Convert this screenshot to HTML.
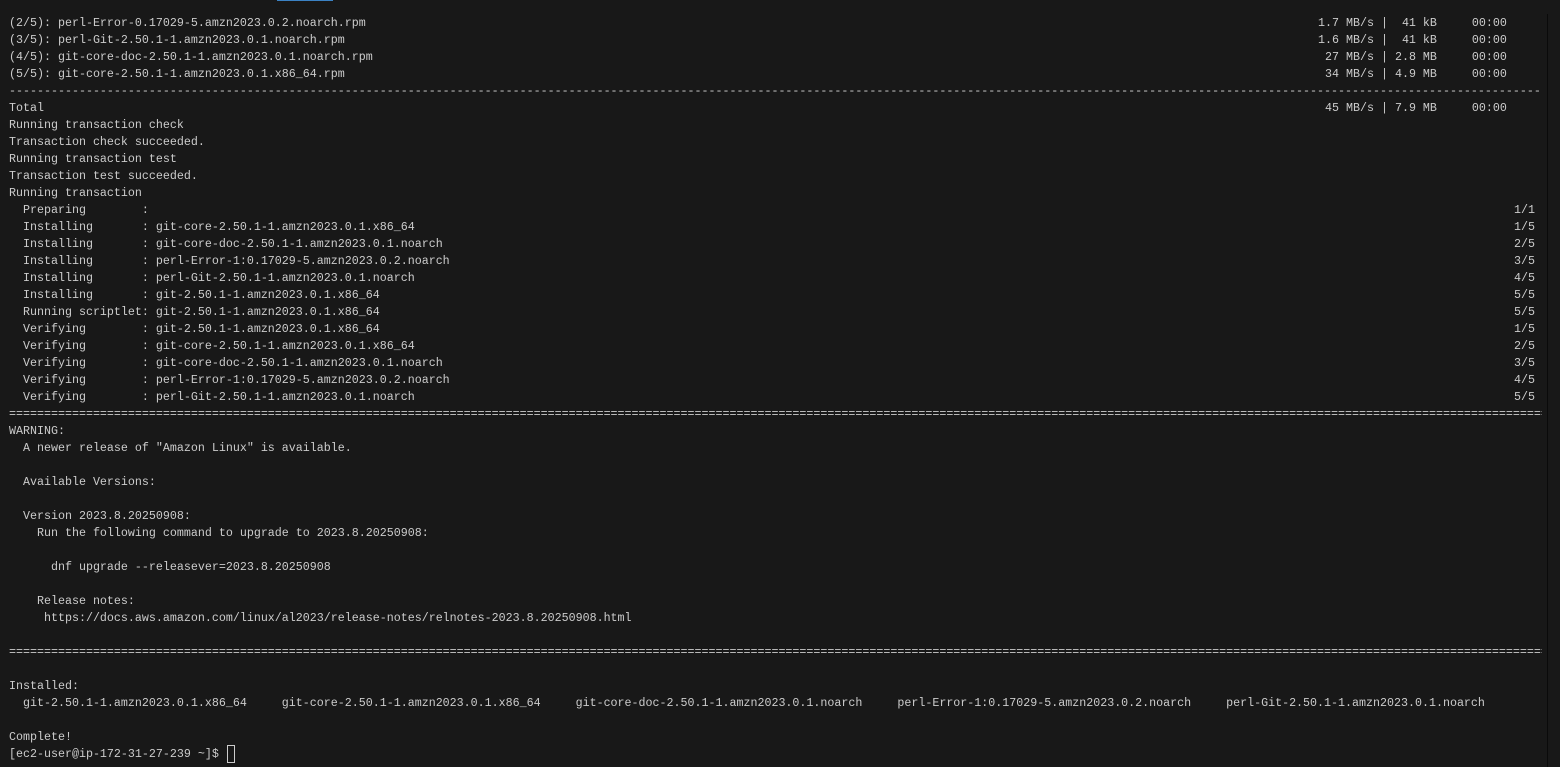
<!DOCTYPE html>
<html><head><meta charset="utf-8"><style>
html,body{margin:0;padding:0;background:#181818;width:1560px;height:767px;overflow:hidden}
#t{position:absolute;left:9px;top:15px;margin:0;font-family:"Liberation Mono",monospace;font-size:11.67px;line-height:17px;color:#cccccc;white-space:pre}
.l{position:relative;height:17px}
.h{overflow:hidden;width:1533px}
.r{position:absolute;top:0}
.b{left:1505px;}
#vl{position:absolute;left:1547px;top:14px;width:1px;height:753px;background:#0a0a0a}
#bl{position:absolute;left:277px;top:0;width:56px;height:1px;background:#3b82c4}
#cur{position:absolute;left:227px;top:745px;width:6px;height:16px;border:1px solid #cccccc}
</style></head><body>
<div id="bl"></div><div id="vl"></div>
<div id="t"><div class="l">(2/5): perl-Error-0.17029-5.amzn2023.0.2.noarch.rpm<span class="r" style="left:1309px">1.7 MB/s |  41 kB     00:00</span></div><div class="l">(3/5): perl-Git-2.50.1-1.amzn2023.0.1.noarch.rpm<span class="r" style="left:1309px">1.6 MB/s |  41 kB     00:00</span></div><div class="l">(4/5): git-core-doc-2.50.1-1.amzn2023.0.1.noarch.rpm<span class="r" style="left:1316px">27 MB/s | 2.8 MB     00:00</span></div><div class="l">(5/5): git-core-2.50.1-1.amzn2023.0.1.x86_64.rpm<span class="r" style="left:1316px">34 MB/s | 4.9 MB     00:00</span></div><div class="l h">-----------------------------------------------------------------------------------------------------------------------------------------------------------------------------------------------------------------------------------</div><div class="l">Total<span class="r" style="left:1316px">45 MB/s | 7.9 MB     00:00</span></div><div class="l">Running transaction check</div><div class="l">Transaction check succeeded.</div><div class="l">Running transaction test</div><div class="l">Transaction test succeeded.</div><div class="l">Running transaction</div><div class="l">  Preparing        :<span class="r b">1/1</span></div><div class="l">  Installing       : git-core-2.50.1-1.amzn2023.0.1.x86_64<span class="r b">1/5</span></div><div class="l">  Installing       : git-core-doc-2.50.1-1.amzn2023.0.1.noarch<span class="r b">2/5</span></div><div class="l">  Installing       : perl-Error-1:0.17029-5.amzn2023.0.2.noarch<span class="r b">3/5</span></div><div class="l">  Installing       : perl-Git-2.50.1-1.amzn2023.0.1.noarch<span class="r b">4/5</span></div><div class="l">  Installing       : git-2.50.1-1.amzn2023.0.1.x86_64<span class="r b">5/5</span></div><div class="l">  Running scriptlet: git-2.50.1-1.amzn2023.0.1.x86_64<span class="r b">5/5</span></div><div class="l">  Verifying        : git-2.50.1-1.amzn2023.0.1.x86_64<span class="r b">1/5</span></div><div class="l">  Verifying        : git-core-2.50.1-1.amzn2023.0.1.x86_64<span class="r b">2/5</span></div><div class="l">  Verifying        : git-core-doc-2.50.1-1.amzn2023.0.1.noarch<span class="r b">3/5</span></div><div class="l">  Verifying        : perl-Error-1:0.17029-5.amzn2023.0.2.noarch<span class="r b">4/5</span></div><div class="l">  Verifying        : perl-Git-2.50.1-1.amzn2023.0.1.noarch<span class="r b">5/5</span></div><div class="l h">===================================================================================================================================================================================================================================</div><div class="l">WARNING:</div><div class="l">  A newer release of "Amazon Linux" is available.</div><div class="l"></div><div class="l">  Available Versions:</div><div class="l"></div><div class="l">  Version 2023.8.20250908:</div><div class="l">    Run the following command to upgrade to 2023.8.20250908:</div><div class="l"></div><div class="l">      dnf upgrade --releasever=2023.8.20250908</div><div class="l"></div><div class="l">    Release notes:</div><div class="l">     https://docs.aws.amazon.com/linux/al2023/release-notes/relnotes-2023.8.20250908.html</div><div class="l"></div><div class="l h">===================================================================================================================================================================================================================================</div><div class="l"></div><div class="l">Installed:</div><div class="l">  git-2.50.1-1.amzn2023.0.1.x86_64     git-core-2.50.1-1.amzn2023.0.1.x86_64     git-core-doc-2.50.1-1.amzn2023.0.1.noarch     perl-Error-1:0.17029-5.amzn2023.0.2.noarch     perl-Git-2.50.1-1.amzn2023.0.1.noarch</div><div class="l"></div><div class="l">Complete!</div><div class="l">[ec2-user@ip-172-31-27-239 ~]$ </div></div>
<div id="cur"></div>
</body></html>
